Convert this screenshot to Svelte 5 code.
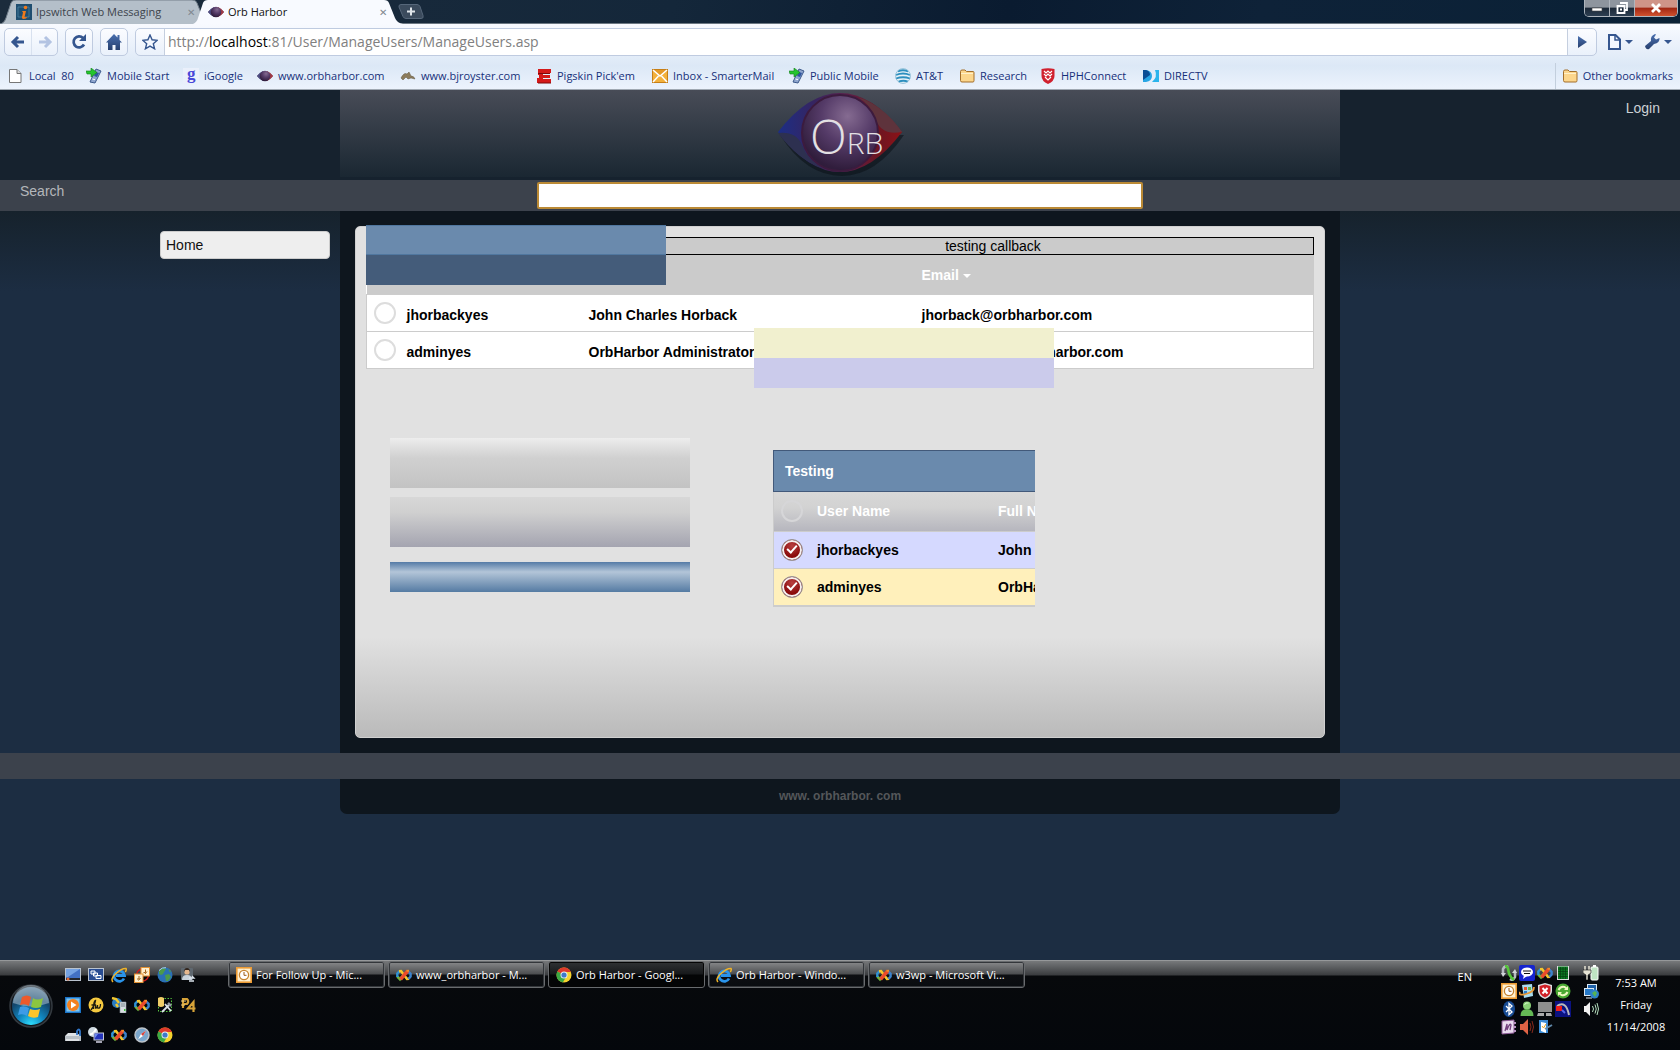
<script>
  const bookmarks = [
    ['page', 'Local  80'],
    ['mobile', 'Mobile Start'],
    ['google', 'iGoogle'],
    ['orb', 'www.orbharbor.com'],
    ['bird', 'www.bjroyster.com'],
    ['espn', "Pigskin Pick'em"],
    ['mail', 'Inbox - SmarterMail'],
    ['mobile', 'Public Mobile'],
    ['att', 'AT&T'],
    ['folder', 'Research'],
    ['shield', 'HPHConnect'],
    ['directv', 'DIRECTV']
  ];
  const quick = [
    'desktop', 'windows', 'ie', 'outlook2', 'globe', 'person',
    'play', 'fw', 'server', 'vs', 'tools', 'p4',
    'drive', 'remote', 'vs', 'safari', 'chrome'
  ];
  const tasks = [
    { icon: 'outlook', label: 'For Follow Up - Mic...' },
    { icon: 'vs', label: 'www_orbharbor - M...' },
    { icon: 'chrome', label: 'Orb Harbor - Googl...', active: true },
    { icon: 'ie', label: 'Orb Harbor - Windo...' },
    { icon: 'vs', label: 'w3wp - Microsoft Vi...' }
  ];
  const tray = [
    'sync', 'chat', 'vs', 'grid',
    'outlook', 'box', 'redshield', 'recycle',
    'bluetooth', 'buddy', 'network', 'meter',
    'onenote', 'speakerred', 'note'
  ];
  const status = ['plug', 'monitors', 'speaker'];
  const users = [
    { id: 'jhorback', user: 'jhorbackyes', full: 'John Charles Horback', email: 'jhorback@orbharbor.com', tone: 'violet' },
    { id: 'admin', user: 'adminyes', full: 'OrbHarbor Administrator', email: 'administrator@orbharbor.com', tone: 'yellow' }
  ];
</script>

{#snippet icon(name)}
  <svg class="ic" viewBox="0 0 16 16" width="16" height="16" aria-hidden="true">
    {#if name === 'page'}
      <path d="M1.500 1.500h7.500l4 4v9h-11.500z" fill="#fff" stroke="#777" /><path d="M9 1.500v4h4" fill="#ddd" stroke="#777" />
    {:else if name === 'mobile'}
      <path d="M10 1l5 2-6 12-5-1z" fill="#8fa6cf" stroke="#3d5a8c" /><path d="M10 4l3 1-2 4-3-1z" fill="#2f55a0" /><path d="M6.500 11l2.500.7" stroke="#fff" />
      <path d="M0 3h5V0l6 4.500L5 9V6H1z" fill="#25c52e" stroke="#128019" stroke-width=".6" />
    {:else if name === 'google'}
      <rect width="16" height="16" fill="#eaf0fb" /><text x="4" y="11" font-family="Liberation Serif, serif" font-size="17" font-weight="bold" fill="#4747d8">g</text>
    {:else if name === 'orb'}
      <path d="M0 8Q8-1 16 8Q8 17 0 8" fill="#5b3250" /><path d="M0 8Q3 4 6 3v10Q2 11 0 8" fill="#4c4f86" /><path d="M16 8Q13 4 10 3v10q4-2 6-5" fill="#a53a44" /><circle cx="8" cy="8" r="5.300" fill="url(#orbg)" />
    {:else if name === 'bird'}
      <path d="M1 10Q4 4 7 6l2-2 2 4q3 0 4 3l-4-1-3 1-2-2-3 3z" fill="#8c7c5c" stroke="#5f543e" stroke-width=".5" />
    {:else if name === 'espn'}
      <path d="M2 1h13v4H7v2h7v3H7v1h8v4H1v-5h2V7H2z" fill="#d41a1a" /><path d="M2 5.500h12M2 15h13" stroke="#7e0a0a" />
    {:else if name === 'mail'}
      <rect x=".5" y="1.500" width="15" height="13" fill="#f3b13c" stroke="#c77f17" /><path d="M1 2l7 6 7-6z" fill="#e59a26" /><path d="M1 2l7 6 7-6M1 14l5.500-6M15 14L9.500 8" fill="none" stroke="#fff" stroke-width="1.500" />
    {:else if name === 'att'}
      <circle cx="8" cy="8" r="7.500" fill="#e8f2f8" /><path d="M3 3.500q5-2.500 10 0M1 7q7-3 14 0M1 10.500q7-2.500 14 0M3.500 13.500q5-1.500 9.500 0" fill="none" stroke="#2d8fbf" stroke-width="1.800" /><circle cx="8" cy="8" r="7.400" fill="none" stroke="#7fb5d0" stroke-width=".8" />
    {:else if name === 'folder'}
      <path d="M1.500 3.500q0-1.500 1.500-1.500h3l1.500 1.500h6.500q1 0 1 1v8q0 1.500-1 1.500h-11q-1.500 0-1.500-1.500z" fill="#fcd68c" stroke="#a36f2c" /><path d="M2 5.500h12" stroke="#fff0c9" />
    {:else if name === 'shield'}
      <path d="M1.500 1Q8-.5 14.500 1v7q0 5-6.500 8Q1.500 13 1.500 8z" fill="#d0212f" /><path d="M4 3l2 2 2-2 2 2 2-2M4 6l2 2 2-2 2 2 2-2M5 9l3 3 3-3" fill="none" stroke="#fff" stroke-width="1.200" />
    {:else if name === 'directv'}
      <path d="M0 2h3q6 1 6 6t-6 6H0z" fill="#27a5e4" /><path d="M0 2h3q4 1 4 5L0 12z" fill="#0b4d95" /><path d="M12 2h4v12H9q6-5 3-12" fill="#2bb4ec" />
    {:else if name === 'ipswitch'}
      <rect width="16" height="16" fill="#1f4e70" /><path d="M2 13V3h11v10z" fill="none" stroke="#4e8aa6" stroke-width=".7" /><circle cx="9.500" cy="3.500" r="1.800" fill="#f07a1c" /><path d="M6 7h4l-1.500 6q2 .5 3-.5-1 2.500-4 2.500-2 0-1.500-2L7 8.500z" fill="#f07a1c" />
    {:else if name === 'desktop'}
      <rect x=".5" y="1.500" width="15" height="12" fill="#4271c4" stroke="#b9c3cf" /><path d="M1 2h14L3 10H1z" fill="#75a3e3" /><path d="M1 11h14v2H1z" fill="#23262b" /><circle cx="3" cy="12" r="1.500" fill="#e06b36" />
    {:else if name === 'windows'}
      <rect x=".5" y="1.500" width="15" height="12" fill="#284c92" stroke="#b9c3cf" /><path d="M3 4h4v3H3zM5.500 6h4v3h-4zM8 8.500h5v3H8z" fill="#3f68ac" stroke="#fff" />
    {:else if name === 'ie'}
      <path d="M13 11.500A5.200 5.200 0 1 1 13.500 8.500H5" fill="none" stroke="#2a94ea" stroke-width="2.800" /><path d="M2 15Q-1 12 5 6.500T15 1.500q.8 1-.7 3.500" fill="none" stroke="#f0b429" stroke-width="1.500" />
    {:else if name === 'outlook'}
      <rect x=".8" y=".8" width="14.400" height="14.400" fill="#fff0cf" stroke="#ec9b34" stroke-width="1.600" /><circle cx="8" cy="8" r="4.600" fill="#fff" stroke="#c4822f" stroke-width="1.300" /><path d="M8 5v3.300h2.500" fill="none" stroke="#9c5a14" />
    {:else if name === 'outlook2'}
      <circle cx="8.500" cy="8" r="6" fill="none" stroke="#d21919" stroke-width="1.300" /><rect x="7" y=".5" width="8.500" height="8.500" fill="#fff0cf" stroke="#e29234" /><rect x=".5" y="7" width="8.500" height="8.500" fill="#fff0cf" stroke="#e29234" /><path d="M11.500 2.500v3h-2M5 9v3H3M13 4.500l-2 2.500M6.500 11l-2 2.500" fill="none" stroke="#a4641c" />
    {:else if name === 'globe'}
      <circle cx="8" cy="8" r="7.500" fill="#2a70b4" /><path d="M2 4q3-4 7-2L7 5 6 7 4 8 2 7zM8 8l4-1 2 3-3 4H9zM11 2l3 2-1 1.500z" fill="#4c9a49" /><path d="M2 3.500Q5 0 9 .7" stroke="#a8d4f4" fill="none" />
    {:else if name === 'person'}
      <rect x="1" y="1" width="12" height="12" rx="1" fill="#5f6870" /><circle cx="7" cy="5" r="2.600" fill="#e5b78e" /><path d="M4 5q0-4 3-4t3 4l-1-2H5z" fill="#33251c" /><path d="M2 13q0-5 5-5t5 5z" fill="#c8d2dc" /><path d="M9 11h5l-2-2m2 5H9" stroke="#dce4ec" stroke-width="1.300" fill="none" />
    {:else if name === 'play'}
      <rect x=".7" y=".7" width="14.600" height="14.600" fill="#7cc4ef" stroke="#1a74c9" stroke-width="1.400" /><circle cx="8" cy="8" r="6" fill="#f4801e" /><path d="M6 4.500l5.500 3.500L6 11.500z" fill="#fff" />
    {:else if name === 'fw'}
      <circle cx="8" cy="8" r="7.500" fill="#f5c93f" /><path d="M3 13Q7 8 7.500 3.500 5.500 4 5.500 12M3.500 8h4l0 3q2 0 2-3v3q3 1 3-4" fill="none" stroke="#1b1a10" stroke-width="1.300" />
    {:else if name === 'server'}
      <circle cx="6" cy="6" r="5" fill="#2a7cc2" /><path d="M1 1l4 1 3 4M5 7l2 3" stroke="#f2c72e" stroke-width="2.400" fill="none" /><path d="M9 5h6v11H9z" fill="#d8dee2" stroke="#8b969d" stroke-width=".6" /><path d="M10 7h4M10 9h4" stroke="#74828c" /><path d="M13 12h1.500v2H13z" fill="#3bc13b" />
    {:else if name === 'vs'}
      <path d="M7.500 8L4 12.200 1.300 9.500" fill="none" stroke="#6fb43f" stroke-width="2.600" />
      <path d="M1.300 10L1.300 6.500 4 3.800" fill="none" stroke="#2f93d6" stroke-width="2.400" />
      <path d="M3 4.200L5 4 11 12 13 11.800" fill="none" stroke="#f5c62c" stroke-width="2.600" />
      <path d="M11.500 4L14.600 6.800V9.500L12.500 12" fill="none" stroke="#3b83cc" stroke-width="2.400" />
      <path d="M4.500 12.400L11.800 3.800" stroke="#ea4b2b" stroke-width="3.600" />
      <path d="M10.500 3.800h2.500" stroke="#f18a2a" stroke-width="2" />
    {:else if name === 'tools'}
      <rect x="1.500" y="1.500" width="13" height="13" fill="none" stroke="#55c53f" stroke-dasharray="1.500 1.500" /><path d="M1 1q3-2 6 0v8q-3 2-6 0z" fill="#f0cd67" /><path d="M5 15l8-8M8 7l6 7" stroke="#dce2e8" stroke-width="1.800" /><path d="M11 6l3 3" stroke="#949ba5" stroke-width="2.500" />
    {:else if name === 'p4'}
      <path d="M3 11V2h4q2.500 2.500 0 5H3M13.500 15V5L8 11.500h7.500" fill="none" stroke="#d6a238" stroke-width="2.200" /><path d="M1 4h5M1 8h4" stroke="#f1cf7e" />
    {:else if name === 'drive'}
      <path d="M3 6h9l4 3v5H0V9z" fill="#dfe3e7" /><path d="M0 9h16v5H0z" fill="#b9c0c7" /><path d="M1 13h13" stroke="#fff" /><path d="M12 8V4q2-3 3 0v5" fill="none" stroke="#3276c8" stroke-width="1.800" />
    {:else if name === 'remote'}
      <circle cx="5" cy="5" r="5" fill="#cfdae2" /><path d="M2 7q3 1 6-5" stroke="#fff" stroke-width="2" fill="none" /><rect x="6" y="6" width="9.500" height="7" fill="#2433ba" stroke="#c5cad6" /><path d="M7 7h3l-3 4z" fill="#6c8bf2" /><path d="M8 15h6" stroke="#ccd" stroke-width="1.600" />
    {:else if name === 'safari'}
      <circle cx="8" cy="8" r="7" fill="#7aa6cc" stroke="#bcc3ca" stroke-width="1.500" /><path d="M12 3.500L9 9 4 12.500 7 7z" fill="#fff" /><path d="M12 3.500L9 9 7 7z" fill="#d5403a" />
    {:else if name === 'chrome'}
      <circle cx="8" cy="8" r="7.500" fill="#f5d22e" /><path d="M8 8L1.300 4.600A7.500 7.500 0 0 1 14.900 5H8z" fill="#de3a2b" /><path d="M8 8L1.300 4.600a7.500 7.500 0 0 0 5.500 10.800L10 10z" fill="#3ba845" /><circle cx="8" cy="8" r="3.500" fill="#e9eef3" /><circle cx="8" cy="8" r="2.600" fill="#3d79c9" />
    {:else if name === 'sync'}
      <path d="M2 9V4q2-4 5-2M14 7v5q-2 4-5 2" fill="none" stroke="#b7bcc2" stroke-width="2.600" /><path d="M0 8h5L2 12zM16 8h-5l3-4z" fill="#d0d4d8" /><path d="M4 1q3 0 3.500 5T13 15" fill="none" stroke="#55c53a" stroke-width="2.600" />
    {:else if name === 'chat'}
      <rect width="16" height="16" rx="2" fill="#1524cf" /><ellipse cx="8" cy="7" rx="6" ry="4.500" fill="#fff" /><path d="M5 10l-1 4 4-3z" fill="#fff" /><path d="M4 6h8M5 8.500h6" stroke="#111" />
    {:else if name === 'grid'}
      <rect x="2" y="1" width="12" height="14" fill="#ddd" /><rect x="3" y="1.500" width="10" height="12.500" fill="#0b7a22" /><path d="M3 4h10M3 6.500h10M3 9h10M3 11.500h10M5.500 2v12M8 2v12M10.500 2v12" stroke="#063d10" stroke-width=".7" />
    {:else if name === 'box'}
      <path d="M3 2l10-1 1 12-9 2z" fill="#a8dcef" /><path d="M5 4h3v3H5z" fill="#e5582f" /><path d="M9 4h3v3H9z" fill="#6ab648" /><path d="M5 8h3v3H5z" fill="#2a7ccd" /><path d="M1 9q-2 4 6 2t8-7" fill="none" stroke="#eb9a35" stroke-width="1.800" />
    {:else if name === 'redshield'}
      <path d="M8 0l7 2v6q0 5-7 8Q1 13 1 8V2z" fill="#dde0e3" /><path d="M8 1.500l5.500 1.500v5q0 4-5.500 6.500Q2.500 12 2.500 8V3z" fill="#cf2027" /><path d="M5.500 5l5 5.500M10.500 5l-5 5.500" stroke="#fff" stroke-width="2" />
    {:else if name === 'recycle'}
      <circle cx="8" cy="8" r="7.500" fill="#4aa832" /><path d="M3.500 7q2-4 6-3l2 1.500M12.500 9q-2 4-6 3l-2-1.500" fill="none" stroke="#eef8c0" stroke-width="2" /><path d="M9 7h4V3zM7 9H3v4z" fill="#eef8c0" />
    {:else if name === 'bluetooth'}
      <ellipse cx="8" cy="8" rx="6" ry="8" fill="#174b93" /><path d="M5 5l6 6-3 2.500v-11L11 5l-6 6" fill="none" stroke="#fff" stroke-width="1.300" />
    {:else if name === 'buddy'}
      <circle cx="8" cy="4.500" r="4" fill="#8bd278" /><path d="M1.500 15q0-7 6.500-7t6.500 7z" fill="#65b955" /><path d="M5.500 4q1-3 4-2" stroke="#d5f5ca" fill="none" />
    {:else if name === 'network'}
      <rect x="1" y="1" width="14" height="10" fill="#8e8e8e" /><path d="M1 12h6v3H0zM9 12h5l1 3H9z" fill="#aaa" />
    {:else if name === 'meter'}
      <rect width="16" height="16" fill="#0b1280" /><path d="M2 5q9-6 12 9" fill="none" stroke="#bbb" stroke-width="2" /><path d="M1 5h6v5H1z" fill="#ee1b1b" /><path d="M7 9l3 3" stroke="#5767e8" stroke-width="2" />
    {:else if name === 'onenote'}
      <path d="M1 2l12-1v13l-12 1z" fill="#eadcf0" stroke="#8d5a98" /><path d="M4 12l2-7 0 6q3-8 4-5l-1 5" fill="none" stroke="#73407f" stroke-width="1.300" /><path d="M13 4h2M13 8h2M13 12h2" stroke="#b692c0" stroke-width="2" />
    {:else if name === 'speakerred'}
      <path d="M1 5h3l5-5v16l-5-5H1z" fill="#e06345" /><path d="M11 4q2 4 0 8M13 2q3 6 0 12" fill="none" stroke="#8a2a1c" />
    {:else if name === 'note'}
      <path d="M2 1h9v13H2z" fill="#3b8bd6" /><path d="M4 3l5 1v10l-5-2z" fill="#fff" /><path d="M5 7l1.500 2L9 5" stroke="#e9a520" fill="none" /><path d="M8 10l7-4" stroke="#5f87a8" stroke-width="2" />
    {:else if name === 'plug'}
      <rect x="8" y="2" width="7" height="13" rx="1" fill="#bfe4c3" stroke="#fff" /><path d="M10 0h3v2h-3z" fill="#fff" /><path d="M2 1v4M6 1v4" stroke="#e8e4d5" stroke-width="1.500" /><path d="M0 5h8v3l-3 2v5H3v-5L0 8z" fill="#e8e4d5" stroke="#111" stroke-width=".6" />
    {:else if name === 'monitors'}
      <rect x="4.500" y="1.500" width="9" height="7" fill="#1d5fa7" stroke="#dce8f2" /><rect x="1.500" y="5.500" width="9" height="7" fill="#2679c8" stroke="#dce8f2" /><path d="M3 15h6" stroke="#dce8f2" /><circle cx="11.500" cy="11" r="4.500" fill="#2e82c8" /><path d="M9 10l3-2 2 2-2 4z" fill="#56b352" />
    {:else if name === 'speaker'}
      <path d="M1 5h2l4-4v14l-4-4H1z" fill="#f2f2f2" /><path d="M9.500 5q2 3 0 6M12 3.500q2.500 4.500 0 9M14 2q3 6 0 12" fill="none" stroke="#b9e3c2" />
    {/if}
  </svg>
{/snippet}

<svg class="defs" width="0" height="0" aria-hidden="true">
  <defs>
    <radialGradient id="orbg" cx=".6" cy=".28" r=".7">
      <stop offset="0" stop-color="#856b91" /><stop offset=".5" stop-color="#553b68" /><stop offset="1" stop-color="#301d3c" />
    </radialGradient>
    <linearGradient id="eye" x1="0" x2="1">
      <stop offset="0" stop-color="#1c2e86" /><stop offset=".3" stop-color="#37245f" /><stop offset=".55" stop-color="#5b1f4c" /><stop offset=".8" stop-color="#6b1622" /><stop offset="1" stop-color="#8d1116" />
    </linearGradient>
    <radialGradient id="start" cx=".5" cy="1" r="1">
      <stop offset="0" stop-color="#2fe0ff" /><stop offset=".35" stop-color="#1186bf" /><stop offset=".7" stop-color="#134469" /><stop offset="1" stop-color="#5a7c96" />
    </radialGradient>
    <linearGradient id="btn" x2="0" y2="1">
      <stop offset="0" stop-color="#4a70b0" /><stop offset="1" stop-color="#27406f" />
    </linearGradient>
  </defs>
</svg>

<div class="screen">
  <header class="chrome">
    <div class="tabs">
      <div class="tab">
        <svg class="shape" viewBox="0 0 210 24" width="210" height="24" aria-hidden="true"><path d="M0 24Q4 22 5 18L10 3Q11 0 15 0H191Q195 0 196 3L202 18Q204 23 210 24" fill="#b4bfc9" stroke="#74808c" /></svg>
        <div class="tab-in">{@render icon('ipswitch')}<span>Ipswitch Web Messaging</span><button class="x" aria-label="Close Ipswitch Web Messaging">✕</button></div>
      </div>
      <div class="tab current">
        <svg class="shape" viewBox="0 0 210 24" width="210" height="24" aria-hidden="true"><path d="M0 24Q4 22 5 18L10 3Q11 0 15 0H191Q195 0 196 3L202 18Q204 23 210 24" fill="#f8faff" /></svg>
        <div class="tab-in">{@render icon('orb')}<span>Orb Harbor</span><button class="x" aria-label="Close Orb Harbor">✕</button></div>
      </div>
      <button class="newtab" aria-label="New tab">
        <svg viewBox="0 0 26 15" width="26" height="15"><path d="M3 .5h16q2 0 3 2l3 9q1 3-2 3H8q-2 0-3-2L1 3Q.5.500 3 .5" fill="#3b4b5d" stroke="#56677a" /><path d="M13 3.500v8M9 7.500h8" stroke="#dfe5ea" stroke-width="2" /></svg>
      </button>
      <div class="winbtns">
        <button aria-label="Minimize"><svg viewBox="0 0 12 12" width="12" height="12"><path d="M1 6h10v3H1z" fill="#fff" stroke="#444" stroke-width=".6" /></svg></button>
        <button aria-label="Restore"><svg viewBox="0 0 12 12" width="12" height="12"><path d="M4 1h7v7H9M1.500 4h7v7h-7z" fill="none" stroke="#fff" stroke-width="1.800" /><path d="M4 6.500h2v2H4z" fill="#fff" /></svg></button>
        <button class="close" aria-label="Close"><svg viewBox="0 0 12 12" width="12" height="12"><path d="M2 2l8 8M10 2l-8 8" stroke="#fff" stroke-width="2.800" /></svg></button>
      </div>
    </div>

    <div class="toolbar">
      <div class="group">
        <button aria-label="Back"><svg viewBox="0 0 16 16" width="16" height="16"><path d="M14 8H3M8 3L3 8l5 5" fill="none" stroke="#35568f" stroke-width="3" /></svg></button>
        <button class="split" aria-label="Forward"><svg viewBox="0 0 16 16" width="16" height="16"><path d="M2 8h11M8 3l5 5-5 5" fill="none" stroke="#b3c3e2" stroke-width="3" /></svg></button>
      </div>
      <div class="group"><button aria-label="Reload"><svg viewBox="0 0 16 16" width="16" height="16"><path d="M13 10.500A5.500 5.500 0 1 1 12 4" fill="none" stroke="#35568f" stroke-width="2.700" /><path d="M15 0v7H8z" fill="#35568f" /></svg></button></div>
      <div class="group"><button aria-label="Home"><svg viewBox="0 0 16 16" width="16" height="16"><path d="M8 0L0 8.500h2V16h4.500v-5h3v5H14V8.500h2L13.500 6V1h-2v2.500z" fill="url(#btn)" /></svg></button></div>
      <form class="omni" onsubmit={(e) => e.preventDefault()}>
        <button type="button" aria-label="Bookmark this page"><svg viewBox="0 0 16 16" width="16" height="16"><path d="M8 1l2.100 4.800 5.200.5-4 3.400 1.300 5.100L8 12.100l-4.600 2.700 1.300-5.100-4-3.400 5.200-.5z" fill="#f4f8ff" stroke="#35568f" stroke-width="1.400" /></svg></button>
        <div class="url">http://<b>localhost</b>:81/User/ManageUsers/ManageUsers.asp</div>
        <button aria-label="Go"><svg viewBox="0 0 16 16" width="16" height="16"><path d="M4 2l9 6-9 6z" fill="url(#btn)" /></svg></button>
      </form>
      <div class="menus">
        <button aria-label="Page menu"><svg viewBox="0 0 26 16" width="26" height="16"><path d="M2 1h6.500L13 5.500V15H2z" fill="#f4f8ff" stroke="#35568f" stroke-width="2" /><path d="M8 1v5h5" fill="none" stroke="#35568f" stroke-width="1.500" /><path d="M18 6h8l-4 4z" fill="#35568f" /></svg></button>
        <button aria-label="Tools menu"><svg viewBox="0 0 28 16" width="28" height="16"><path d="M1 12l6-5q-1-5 4-7l1 .5-2 3 2 2 3.500-1.500q.5 5-5.500 6l-5 5q-3 1-4-3" fill="url(#btn)" /><path d="M20 6h8l-4 4z" fill="#35568f" /></svg></button>
      </div>
    </div>

    <nav class="bookmarks" aria-label="Bookmarks">
      <div class="marks">
        {#each bookmarks as [ic, label]}
          <a href="#top">{@render icon(ic)}<span>{label}</span></a>
        {/each}
      </div>
      <a class="other" href="#top">{@render icon('folder')}<span>Other bookmarks</span></a>
    </nav>
  </header>

  <div class="site">
    <div class="masthead cols">
      <div class="banner">
        <svg class="logo" viewBox="0 0 128 84" width="128" height="84" role="img" aria-label="Orb">
          <path d="M4 43Q30 84 66 84 100 84 128 43z" fill="#0b1219" opacity=".6" />
          <path d="M2 40Q32 1 64 1t62 39Q96 80 64 80T2 40" fill="url(#eye)" />
          <path d="M2 41q18-2 24 12 6 16 22 24Q22 68 2 41" fill="#2d3050" />
          <path d="M126 40q-20 4-26-12Q96 14 82 5q26 9 44 35" fill="#5e333c" />
          <circle cx="64" cy="41" r="38" fill="url(#orbg)" stroke="#3c1b3e" stroke-width="2" />
          <text class="word" x="34" y="62"><tspan class="big">O</tspan><tspan>RB</tspan></text>
        </svg>
      </div>
      <a class="login" href="#login">Login</a>
    </div>

    <form class="search cols" onsubmit={(e) => e.preventDefault()}>
      <label for="q">Search</label>
      <input id="q" type="text" />
    </form>

    <div class="main cols">
      <nav class="side"><a href="#home">Home</a></nav>
      <main class="body">
        <section class="panel">
          <table class="users">
            <colgroup><col class="c1" /><col class="c2" /><col class="c3" /><col /></colgroup>
            <thead>
              <tr class="callback"><td colspan="4">testing callback</td></tr>
              <tr class="heads"><th></th><th></th><th></th><th>Email <i class="caret"></i></th></tr>
            </thead>
            <tbody>
              {#each users as u}
                <tr>
                  <td><input type="checkbox" aria-label={u.user} /></td>
                  <td>{u.user}</td><td>{u.full}</td><td>{u.email}</td>
                </tr>
              {/each}
            </tbody>
          </table>
          <div class="swatch steel"></div>
          <div class="swatch pastel"></div>

          <div class="lower">
            <div class="bars">
              <div class="bar light"></div>
              <div class="bar mauve"></div>
              <div class="bar blue"></div>
            </div>
            <section class="widget">
              <h2>Testing</h2>
              <div class="clip">
                <table>
                  <colgroup><col class="c1" /><col class="c2" /><col class="c3" /></colgroup>
                  <thead>
                    <tr><th><input type="checkbox" class="faint" aria-label="Select all" /></th><th>User Name</th><th>Full Name</th></tr>
                  </thead>
                  <tbody>
                    {#each users as u}
                      <tr class={u.tone}>
                        <td><input type="checkbox" checked aria-label={u.user} /></td>
                        <td>{u.user}</td><td>{u.full}</td>
                      </tr>
                    {/each}
                  </tbody>
                </table>
              </div>
            </section>
          </div>
        </section>
      </main>
    </div>

    <div class="rule"></div>
    <div class="foot cols"><footer>www. orbharbor. com</footer></div>
  </div>

  <div class="taskbar">
    <button class="start" aria-label="Start">
      <svg viewBox="0 0 44 44" width="44" height="44">
        <circle cx="22" cy="22" r="21" fill="#14181d" stroke="#343a40" stroke-width="1.500" />
        <circle cx="22" cy="22" r="19" fill="url(#start)" />
        <path d="M4 19a18 18 0 0 1 36 0q-18 7-36 0" fill="#c9d9e4" opacity=".45" />
        <path d="M13 13q5-3 9 0l-2 9q-4-3-9-1z" fill="#ec5a2c" /><path d="M24 14q4 3 10 0l-2 9q-5 2-10 0z" fill="#8cc63e" />
        <path d="M11 23q4-2 9 1l-2 8q-4-3-9-1z" fill="#3e9be6" /><path d="M21 25q5 2 10 0l-2 8q-5 2-10-1z" fill="#fcc52c" />
      </svg>
    </button>
    <div class="quick">{#each quick as q}<button aria-label={q}>{@render icon(q)}</button>{/each}</div>
    <div class="tasks">
      {#each tasks as t}
        <button class:active={t.active}>{@render icon(t.icon)}<span>{t.label}</span></button>
      {/each}
    </div>
    <div class="lang">EN</div>
    <div class="tray">{#each tray as t}{@render icon(t)}{/each}</div>
    <div class="status">{#each status as s}{@render icon(s)}{/each}</div>
    <div class="clock"><span>7:53 AM</span><span>Friday</span><span>11/14/2008</span></div>
  </div>
</div>

<style>
  :global(body) { background: #1c2d42; }
  * { box-sizing: border-box; }
  button { border: 0; padding: 0; margin: 0; background: none; font: inherit; color: inherit; display: flex; align-items: center; justify-content: center; }
  a { text-decoration: none; color: inherit; }
  .defs { position: absolute; }
  .ic { flex: none; display: block; }
  .screen { min-height: 100vh; display: flex; flex-direction: column; font-family: "Open Sans", "Noto Sans", sans-serif; font-size: 12px; line-height: 16px; }

  .chrome { border-bottom: 1px solid #a0a9b3; background: linear-gradient(#f8faff 24px, #dce8f6 66px, #ecf3fd); }
  .tabs { display: flex; height: 24px; padding-left: 1px; background: linear-gradient(100deg, #1c2c3c, #14273a 40%, #0a1b30 60%, #0e2238 75%, #0a2136); border-bottom: 1px solid #6b7782; }
  .tab { display: grid; margin-right: -18px; height: 24px; }
  .tab.current { z-index: 1; }
  .shape, .tab-in { grid-area: 1 / 1; }
  .tab-in { display: flex; align-items: center; gap: 4px; padding: 0 16px 0 15px; color: #3d444c; z-index: 1; }
  .current .tab-in { color: #111; }
  .tab-in span { flex: 1; white-space: nowrap; font-size: 11px; }
  .x { font-size: 10px; color: #808890; }
  .newtab { align-self: center; margin-left: 13px; }
  .winbtns { display: flex; height: 17px; margin: 0 2px 0 auto; border: 1px solid #aeb5bd; border-top: 0; border-radius: 0 0 5px 5px; overflow: hidden; }
  .winbtns button { width: 25px; background: linear-gradient(#8e959e 45%, #1b2837 50%, #2d3f52); border-right: 1px solid #aeb5bd; }
  .winbtns .close { width: 42px; border: 0; background: linear-gradient(#cf9488 45%, #a02613 50%, #d0522f); }

  .toolbar { display: flex; align-items: center; padding: 4px 8px 0 4px; gap: 7px; }
  .group, .omni { display: flex; height: 28px; border: 1px solid #bfcbe0; border-radius: 5px; background: linear-gradient(#fbfcff, #eaf1fb); }
  .group button { width: 26px; }
  .group .split { border-left: 1px solid #d8e1ef; }
  .omni { flex: 1; overflow: hidden; }
  .omni button { width: 28px; }
  .url { flex: 1; display: flex; align-items: center; padding-left: 3px; background: #fff; border: solid #c5cfdf; border-width: 0 1px; color: #808080; font-size: 14px; }
  .url b { color: #000; font-weight: 400; }
  .menus { display: flex; gap: 11px; padding-left: 3px; }

  .bookmarks { display: flex; justify-content: space-between; align-items: center; height: 33px; padding: 6px 7px 0 8px; color: #16307a; font-size: 11px; }
  .bookmarks a { display: flex; align-items: center; gap: 5px; white-space: pre; }
  .marks { display: grid; grid-template-columns: 78px 97px 74px 143px 136px 116px 137px 106px 64px 81px 103px 80px; }
  .other { height: 26px; padding-left: 6px; border-left: 1px solid #c3cfdd; }

  .site { flex: 1; font-family: "Liberation Sans", Arial, sans-serif; font-size: 14px; background: #1c2d42; }
  .cols { display: grid; grid-template-columns: minmax(170px, 1fr) minmax(0, 1000px) minmax(0, 1fr); }
  .masthead { background: #16222e; color: #ccd1d5; }
  .banner { grid-column: 2; height: 90px; display: flex; justify-content: center; background: linear-gradient(#484c57, #1a2732 87px, #16222e 87px); padding-top: 2px; }
  .word { font-family: "Liberation Sans Narrow", "Open Sans", sans-serif; font-weight: 300; font-size: 30px; fill: #e3e0e3; }
  .big { font-size: 48px; }
  .login { justify-self: end; padding: 10px 20px 0 0; }
  .search { height: 31px; background: #3c424c; color: #b4b7bb; align-items: center; }
  .search label { padding: 0 0 10px 20px; }
  .search input { justify-self: center; width: 606px; max-width: 100%; height: 27px; border: 2px solid #bb8a35; border-radius: 2px; background: #fff; outline: 0; }
  .main { background: linear-gradient(#16222c, #1c2d42 80px); }
  .side { display: flex; justify-content: flex-end; align-items: flex-start; padding: 20px 10px; }
  .side a { width: 170px; padding: 5px; line-height: 16px; border: 1px solid #ccc; border-radius: 4px; background: #eee; color: #111; height: 28px; }
  .body { background: #0e161e; padding: 15px; }
  .panel { position: relative; border: 1px solid #d0d0d0; border-radius: 5px; padding: 10px 10px 130px; background: linear-gradient(to top, #bababa, #e1e1e1 100px); }

  table { border-collapse: collapse; table-layout: fixed; width: 100%; font-weight: 700; }
  th { text-align: left; color: #fff; font-weight: 700; }
  td, th { padding: 0; white-space: nowrap; }
  .c1 { width: 40px; } .c2 { width: 182px; } .c3 { width: 333px; }
  .users { background: #fff; }
  .callback td { height: 17px; padding-left: 306px; text-align: center; font-weight: 400; line-height: 15px; border: 1px solid #000; background: #cbcbcb; }
  .heads th { height: 40px; background: #cbcbcb; }
  .users tbody tr { height: 37px; border: 1px solid #ccc; }
  .users tbody td:not(:first-child) { padding-top: 3px; }
  .caret { display: inline-block; border: 4px solid transparent; border-top-color: #fff; border-bottom: 0; vertical-align: 2px; }
  input[type="checkbox"] { appearance: none; display: flex; align-items: center; justify-content: center; width: 22px; height: 22px; margin: 0 0 0 7px; border: 2px solid #ddd; border-radius: 50%; background: #fff; }
  input.faint { background: none; border-color: #d6d6d8; }
  input[type="checkbox"]:checked { border: 1px solid #999; background: radial-gradient(circle at 50% 30%, #b84040, #8a0a0a 60%); box-shadow: inset 0 0 0 2px #f4f0f0; }
  input[type="checkbox"]:checked::after { content: ""; width: 8px; height: 4px; margin-bottom: 3px; border: solid #fff; border-width: 0 0 2px 2px; transform: rotate(-48deg); }

  .swatch { position: absolute; width: 300px; height: 60px; }
  .steel { left: 10px; top: -2px; background: linear-gradient(#6a8aad 28px, #50779f 28px 29px, #445c7a 29px); border-top: 1px solid #50779f; }
  .pastel { left: 398px; top: 101px; background: linear-gradient(#f1f0cf 50%, #cbcbeb 50%); }
  .lower { display: grid; grid-template-columns: 300px 262px; column-gap: 83px; padding: 69px 0 0 24px; }
  .bar { height: 50px; }
  .light { background: linear-gradient(#ededed, #d0d0d0 40%, #c3c3c3); }
  .mauve { margin: 9px 0 15px; background: linear-gradient(#d7d7d7, #d0d0d0 30%, #a4a4b0); }
  .blue { height: 30px; background: linear-gradient(#557ba6, #b3c5d8 33%, #557ba3); }
  .widget { margin-top: 12px; overflow: hidden; }
  h2 { margin: 0; height: 42px; padding-left: 11px; font-size: 14px; line-height: 40px; color: #fff; background: #6a8aad; border: 1px solid #42597a; border-right: 0; }
  .clip { overflow: hidden; border: solid #ccc; border-width: 0 0 2px 1px; }
  .clip table { width: 556px; }
  .clip .c1 { width: 43px; } .clip .c2 { width: 181px; }
  .clip th { height: 39px; }
  .clip thead tr { background: linear-gradient(#d8d8d8, #d2d2d2 40%, #b6b6be); }
  .clip tbody tr { height: 37px; border-top: 1px solid #ccc; }
  .violet { background: #d5d9ff; } .yellow { background: #fff0bb; }

  .rule { height: 26px; background: #3c424c; }
  .foot footer { grid-column: 2; height: 35px; line-height: 34px; text-align: center; font-size: 12px; font-weight: 700; color: #54575a; background: #0e161e; border-radius: 0 0 7px 7px; }

  .taskbar { display: flex; align-items: flex-start; height: 90px; padding-right: 7px; color: #fff; border-top: 1px solid #96989a; background: linear-gradient(#77797b, #3a3c3f 14px, #07090c 15px, #04070c); }
  .start { align-self: center; margin-left: 9px; width: 44px; }
  .quick { display: grid; grid-template-columns: repeat(6, 23px); grid-auto-rows: 30px; margin-left: 8px; padding-top: 6px; }
  .quick button { align-items: flex-start; }
  .tasks { display: flex; gap: 3px; margin-left: 29px; flex: 1; min-width: 0; }
  .tasks button { width: 157px; height: 27px; justify-content: flex-start; gap: 4px; padding-left: 7px; font-size: 11px; white-space: nowrap; border: 1px solid #686b6e; border-radius: 3px; background: linear-gradient(#88898b, #4c4e50 12px, #0d0f12 13px, #090c10); box-shadow: inset 0 0 0 1px #33363a; }
  .tasks .active { background: linear-gradient(#303234, #17191b 12px, #040506 13px); box-shadow: inset 0 0 0 1px #050505; }
  .lang { margin: 8px 29px 0 0; font-size: 11px; }
  .tray { display: grid; grid-template-columns: repeat(4, 18px); row-gap: 2px; margin-top: 4px; }
  .status { display: grid; row-gap: 2px; margin: 4px 0 0 10px; }
  .clock { width: 74px; margin-top: 14px; display: flex; flex-direction: column; gap: 6px; text-align: center; font-size: 11px; }
</style>
